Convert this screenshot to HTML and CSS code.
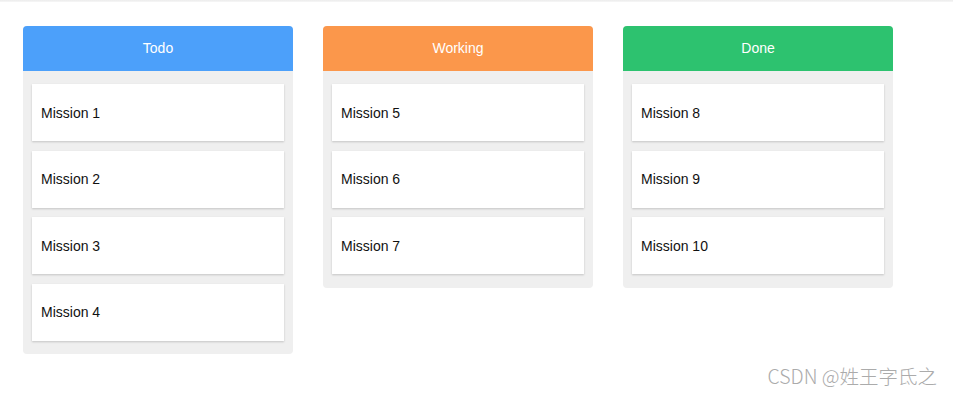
FILE: index.html
```html
<!DOCTYPE html>
<html>
<head>
<meta charset="utf-8">
<link rel="stylesheet" href="styles.css">
</head>
<body>
<div class="topbar"></div>
<div class="board">
  <div class="column">
    <div class="col-head todo">Todo</div>
    <div class="col-body">
      <div class="card">Mission 1</div>
      <div class="card">Mission 2</div>
      <div class="card">Mission 3</div>
      <div class="card">Mission 4</div>
    </div>
  </div>
  <div class="column">
    <div class="col-head working">Working</div>
    <div class="col-body">
      <div class="card">Mission 5</div>
      <div class="card">Mission 6</div>
      <div class="card">Mission 7</div>
    </div>
  </div>
  <div class="column">
    <div class="col-head done">Done</div>
    <div class="col-body">
      <div class="card">Mission 8</div>
      <div class="card">Mission 9</div>
      <div class="card">Mission 10</div>
    </div>
  </div>
</div>
<div class="watermark">CSDN @姓王字氐之</div>
</body>
</html>
```
FILE: styles.css
```css
html, body {
  margin: 0;
  padding: 0;
  background: #fff;
  width: 953px;
  height: 394px;
  overflow: hidden;
  font-family: "Liberation Sans", Arial, sans-serif;
}
body {
  position: relative;
}
.topbar {
  height: 2px;
  background: linear-gradient(#ececec, #f7f7f7);
}
.board {
  display: flex;
  align-items: flex-start;
  gap: 30px;
  padding: 24px 0 0 23px;
}
.column {
  width: 270px;
  background: #efefef;
  border-radius: 4px;
  overflow: hidden;
}
.col-head {
  height: 45px;
  line-height: 45px;
  text-align: center;
  color: #fff;
  font-size: 14px;
}
.todo { background: #4ca0fa; }
.working { background: #fb974b; }
.done { background: #2dc26f; }
.col-body {
  display: flex;
  flex-direction: column;
  gap: 9.67px;
  padding: 13px 9px 13.5px;
}
.card {
  height: 57px;
  background: #fff;
  box-shadow: 0 1px 2px rgba(0,0,0,0.18);
  display: flex;
  align-items: center;
  padding-left: 9px;
  font-size: 14px;
  color: #111;
}
.watermark {
  position: absolute;
  right: 16px;
  top: 362px;
  font-family: "Noto Sans CJK SC", sans-serif;
  font-weight: 300;
  font-size: 19.5px;
  line-height: 28px;
  color: #ababab;
}
```
